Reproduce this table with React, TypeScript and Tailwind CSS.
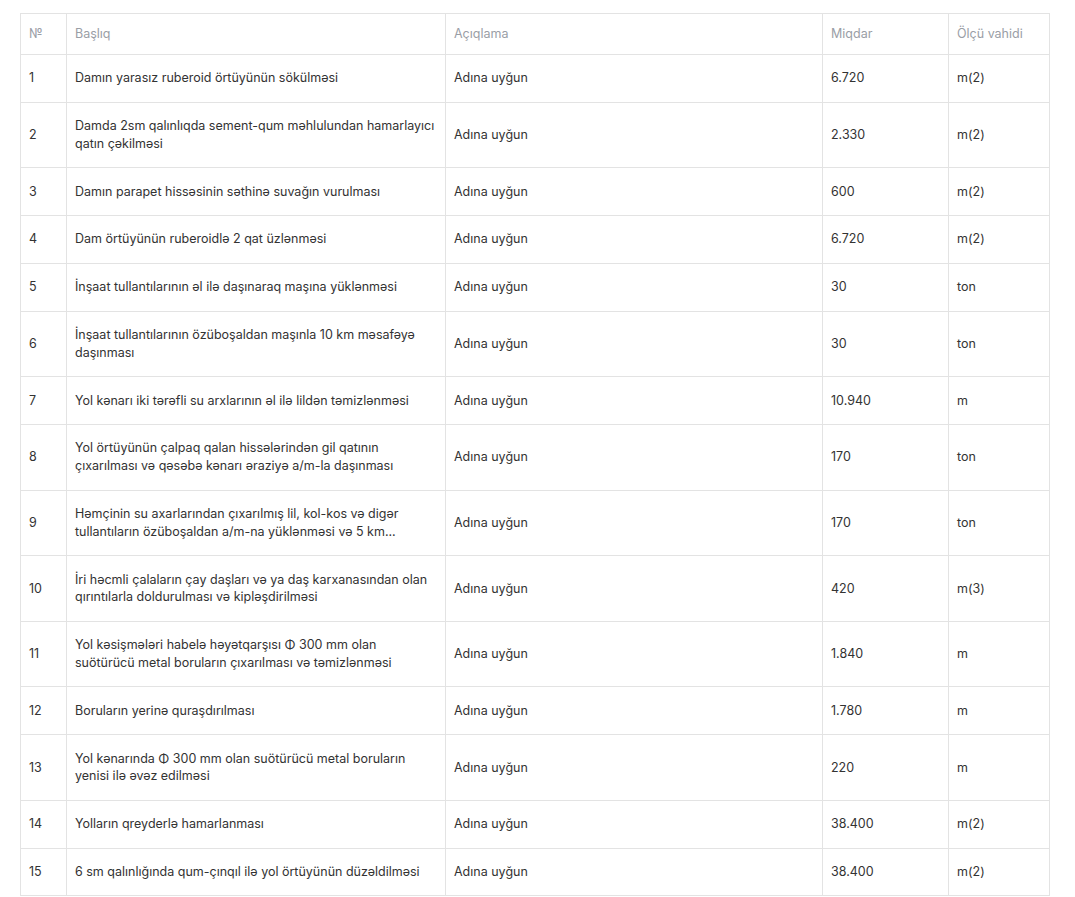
const rows: [string, string, string, string][] = [
  ["1", "Damın yarasız ruberoid örtüyünün sökülməsi", "6.720", "m(2)"],
  ["2", "Damda 2sm qalınlıqda sement-qum məhlulundan hamarlayıcı qatın çəkilməsi", "2.330", "m(2)"],
  ["3", "Damın parapet hissəsinin səthinə suvağın vurulması", "600", "m(2)"],
  ["4", "Dam örtüyünün ruberoidlə 2 qat üzlənməsi", "6.720", "m(2)"],
  ["5", "İnşaat tullantılarının əl ilə daşınaraq maşına yüklənməsi", "30", "ton"],
  ["6", "İnşaat tullantılarının özüboşaldan maşınla 10 km məsafəyə daşınması", "30", "ton"],
  ["7", "Yol kənarı iki tərəfli su arxlarının əl ilə lildən təmizlənməsi", "10.940", "m"],
  ["8", "Yol örtüyünün çalpaq qalan hissələrindən gil qatının çıxarılması və qəsəbə kənarı əraziyə a/m-la daşınması", "170", "ton"],
  ["9", "Həmçinin su axarlarından çıxarılmış lil, kol-kos və digər tullantıların özüboşaldan a/m-na yüklənməsi və 5 km...", "170", "ton"],
  ["10", "İri həcmli çalaların çay daşları və ya daş karxanasından olan qırıntılarla doldurulması və kipləşdirilməsi", "420", "m(3)"],
  ["11", "Yol kəsişmələri habelə həyətqarşısı Φ 300 mm olan suötürücü metal boruların çıxarılması və təmizlənməsi", "1.840", "m"],
  ["12", "Boruların yerinə quraşdırılması", "1.780", "m"],
  ["13", "Yol kənarında Φ 300 mm olan suötürücü metal boruların yenisi ilə əvəz edilməsi", "220", "m"],
  ["14", "Yolların qreyderlə hamarlanması", "38.400", "m(2)"],
  ["15", "6 sm qalınlığında qum-çınqıl ilə yol örtüyünün düzəldilməsi", "38.400", "m(2)"],
];

const th = "border border-[#e3e3e3] px-2 py-[11px] text-left font-normal text-[#9a9ea6] leading-[17.8px]";
const td = "border border-[#e3e3e3] px-2 py-[14.5px] align-middle text-[#333333] leading-[17.8px]";

export default function App() {
  return (
    <div className="min-h-[897px] bg-white pl-[20px] pt-[13px] font-['Inter',sans-serif] text-[12.5px]">
      <table className="w-[1029px] table-fixed border-collapse">
        <colgroup>
          <col className="w-[46px]" />
          <col className="w-[379px]" />
          <col className="w-[377px]" />
          <col className="w-[126px]" />
          <col className="w-[101px]" />
        </colgroup>
        <thead>
          <tr>
            <th className={th}>№</th>
            <th className={th}>Başlıq</th>
            <th className={th}>Açıqlama</th>
            <th className={th}>Miqdar</th>
            <th className={th}>Ölçü vahidi</th>
          </tr>
        </thead>
        <tbody>
          {rows.map(([n, title, qty, unit]) => (
            <tr key={n}>
              <td className={td}>{n}</td>
              <td className={td}>{title}</td>
              <td className={td}>Adına uyğun</td>
              <td className={td}>{qty}</td>
              <td className={td}>{unit}</td>
            </tr>
          ))}
        </tbody>
      </table>
    </div>
  );
}
